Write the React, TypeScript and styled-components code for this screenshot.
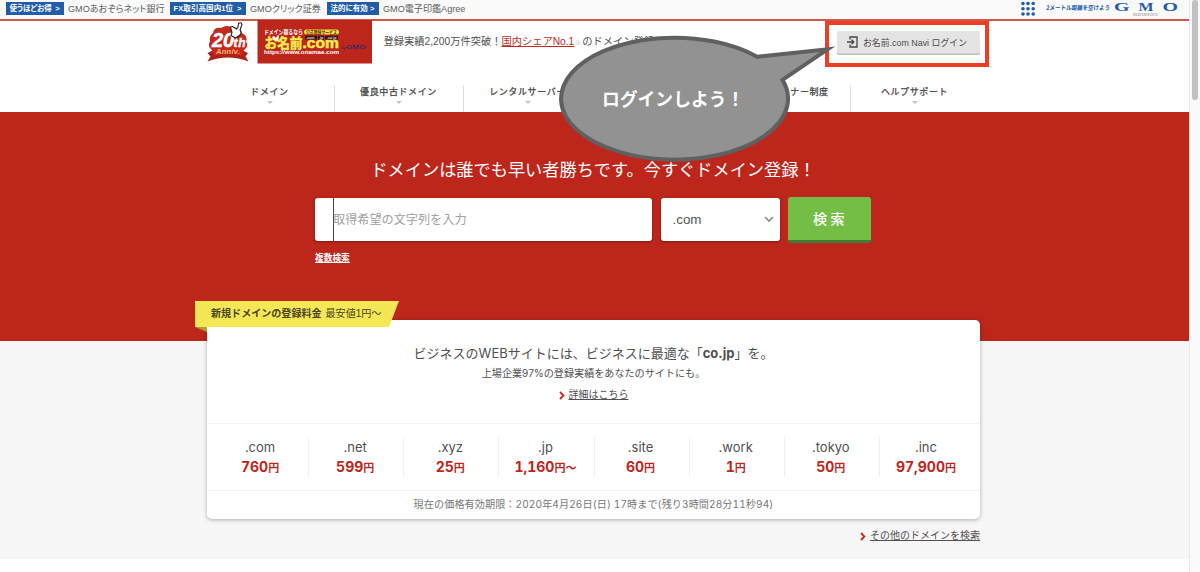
import React from "react";
import styled, { createGlobalStyle } from "styled-components";

const GlobalStyle = createGlobalStyle`
  * { box-sizing: border-box; }
  body {
    margin: 0;
    background: #fff;
    color: #505050;
    font-family: "Liberation Sans", "Noto Sans CJK JP", sans-serif;
    overflow: hidden;
  }
  a { color: inherit; text-decoration: underline; text-underline-offset: 1px; }
`;

const Window = styled.div`
  position: relative;
  display: flex;
  width: 1200px;
  height: 572px;
  overflow: hidden;
`;
const Page = styled.div`
  width: 1189px;
  flex: none;
`;
const Scrollbar = styled.div`
  flex: 1;
  background: #fafafa;
  border-left: 1px solid #e9e9e9;
  padding-left: 1.5px;
`;
const Thumb = styled.div`
  width: 6.5px;
  height: 100px;
  border-radius: 4px;
  background: #c1c1c1;
`;

const TopBar = styled.div`
  height: 21px;
  background: #fafafa;
  border-bottom: 2px solid #d2564b;
  display: flex;
  align-items: flex-start;
  padding: 0 11px 0 6px;
`;
const Promo = styled.div<{ $width: number }>`
  width: ${(p) => p.$width}px;
  height: 17px;
  display: flex;
  align-items: center;
  gap: 4px;
  white-space: nowrap;
  font-size: 9.1px;
  color: #5c5c5c;
  font-feature-settings: "palt";
`;
const Tag = styled.span<{ $width: number; $spacing: number }>`
  width: ${(p) => p.$width}px;
  height: 13px;
  line-height: 13px;
  background: #215ca8;
  color: #fff;
  font-size: 7.5px;
  font-weight: 700;
  letter-spacing: ${(p) => p.$spacing}px;
  display: flex;
  justify-content: space-between;
  padding: 0 4.5px 0 3.5px;
`;
const PromoName = styled.span`
  padding-bottom: 2px;
`;
const GroupMark = styled.svg`
  margin-left: auto;
  display: block;
`;

const Header = styled.header`
  height: 91px;
  padding: 0 209.5px 0 206.5px;
`;
const Brand = styled.div`
  height: 64px;
  display: flex;
  align-items: flex-start;
`;
const Logo = styled.svg`
  display: block;
  flex: none;
  margin-top: -1px;
`;
const Tagline = styled.div`
  margin: 12px 0 0 11.5px;
  width: 453px;
  flex: none;
  line-height: 18px;
  font-size: 10.25px;
  white-space: nowrap;
  a { color: #bd2a21; }
  small { font-size: 6px; color: #bbb; margin: 0 1px; }
`;
const LoginButton = styled.button`
  margin-top: 10px;
  width: 143.5px;
  height: 24px;
  flex: none;
  border: 0;
  border-radius: 2px;
  background: #e4e4e4;
  box-shadow: inset 0 -1.5px 0 #bfbfbf;
  display: flex;
  align-items: center;
  gap: 5.5px;
  padding: 0 0 2px 10px;
  color: #4c4c4c;
  font: 8.9px "Liberation Sans", "Noto Sans CJK JP", sans-serif;
  white-space: nowrap;
`;
const Nav = styled.nav`
  display: flex;
  height: 27px;
  margin: 0 1px 0 -1px;
`;
const NavItem = styled.div`
  flex: 1;
  display: flex;
  flex-direction: column;
  align-items: center;
  border-left: 1px solid #dedede;
  font-size: 9px;
  line-height: 15px;
  letter-spacing: 0.6px;
  white-space: nowrap;
  color: #444;
  -webkit-text-stroke: 0.25px #444;
  &:first-child { border-left: 0; }
  &::after {
    content: "";
    margin-top: 1px;
    border: 3px solid transparent;
    border-top-color: #c4c4c4;
    border-bottom: 0;
  }
`;

const Hero = styled.section`
  height: 229px;
  background: #bd261b;
  color: #fff;
  padding-top: 44px;
`;
const HeroTitle = styled.h1`
  margin: 0;
  padding-right: 3px;
  text-align: center;
  font-size: 17.2px;
  line-height: 28px;
  font-weight: 400;
`;
const Search = styled.form`
  margin: 13px 0 0 315px;
  display: flex;
  align-items: flex-start;
  height: 47px;
`;
const Field = styled.div`
  width: 337px;
  height: 43px;
  margin-top: 1px;
  background: #fff;
  border-radius: 3px;
  box-shadow: 0 1px 3px rgba(0, 0, 0, 0.35);
  padding-left: 18px;
`;
const Placeholder = styled.div`
  height: 43px;
  line-height: 44px;
  border-left: 1px solid #444;
  color: #a0a0a0;
  font-size: 12.15px;
  text-indent: -1px;
`;
const Select = styled.div`
  width: 119px;
  height: 43px;
  margin: 1px 8.5px 0;
  background: #fff;
  border-radius: 3px;
  box-shadow: 0 1px 3px rgba(0, 0, 0, 0.35);
  display: flex;
  align-items: center;
  justify-content: space-between;
  padding: 0 6px 0 12px;
  color: #555;
  font-size: 13.4px;
`;
const SearchButton = styled.button`
  width: 83px;
  height: 46px;
  border: 0;
  border-bottom: 3px solid #3e7d35;
  border-radius: 3px;
  background: #74be46;
  color: #fff;
  font: 400 14px "Noto Sans CJK JP", sans-serif;
  -webkit-text-stroke: 0.2px #fff;
  letter-spacing: 3.5px;
  padding: 0 0 1px 2px;
`;
const Multi = styled.a`
  display: block;
  margin: 6px 0 0 315px;
  width: 36px;
  font-size: 8.7px;
  font-weight: 700;
  line-height: 17px;
  white-space: nowrap;
`;

const Pricing = styled.section`
  height: 218px;
  background: #f7f7f7;
  padding: 0 209px 0 207px;
  display: flow-root;
`;
const Card = styled.div`
  position: relative;
  margin-top: -21px;
  height: 199px;
  background: #fff;
  border-radius: 5px;
  box-shadow: 0 1px 4px rgba(0, 0, 0, 0.3);
  text-align: center;
`;
const Ribbon = styled.div`
  position: absolute;
  left: -12px;
  top: -19px;
  width: 204px;
  height: 26px;
  padding-left: 16px;
  background: #f3e755;
  clip-path: polygon(0 0, 100% 0, 194px 100%, 0 100%);
  text-align: left;
  font-size: 10.05px;
  line-height: 25px;
  white-space: nowrap;
  color: #4a4420;
  b { margin-right: 4px; }
`;
const Fold = styled.div`
  position: absolute;
  left: -12px;
  top: 7px;
  width: 12px;
  height: 5px;
  background: #b39f2e;
  clip-path: polygon(0 0, 100% 0, 100% 100%);
`;
const Intro = styled.div`
  height: 104px;
  padding-top: 22px;
  border-bottom: 1px solid #f4f4f4;
`;
const Lead = styled.div`
  font: 13px/22px Inter, "Noto Sans CJK JP", sans-serif;
`;
const Sub = styled.div`
  font: 10.1px/18px Inter, "Noto Sans CJK JP", sans-serif;
`;
const More = styled.div<{ $right?: boolean }>`
  display: flex;
  justify-content: ${(p) => (p.$right ? "flex-end" : "center")};
  align-items: center;
  gap: 4px;
  font-size: 10px;
  line-height: 16px;
  margin-top: ${(p) => (p.$right ? 9 : 5)}px;
`;
const Prices = styled.div`
  height: 67px;
  padding: 13px 6px;
  display: flex;
  border-bottom: 1px solid #f2f2f2;
`;
const Price = styled.div`
  flex: 1;
  height: 40px;
  border-left: 1px solid #f1f1f1;
  padding-right: 2px;
  &:first-child { border-left-color: transparent; }
`;
const Tld = styled.div`
  font: 13px/21px Inter, "Noto Sans CJK JP", sans-serif;
`;
const Amount = styled.div`
  font: 700 14px/17px Inter, "Noto Sans CJK JP", sans-serif;
  font-feature-settings: "tnum";
  color: #bd261b;
  small { font: 700 11px/17px "Noto Sans CJK JP", sans-serif; }
`;
const Expiry = styled.div`
  font: 10.1px/27px Inter, "Noto Sans CJK JP", sans-serif;
  font-feature-settings: "tnum";
  letter-spacing: 0.1px;
  color: #777;
`;

const LoginFrame = styled.div`
  position: absolute;
  left: 824.5px;
  top: 21px;
  width: 164.5px;
  height: 46px;
  border: 4px solid #ef3d26;
`;
const Balloon = styled.svg`
  position: absolute;
  left: 550px;
  top: 30px;
`;
const BalloonText = styled.div`
  position: absolute;
  left: 602px;
  top: 84px;
  font: 700 17.8px/28px "Noto Sans CJK JP", sans-serif;
  color: #fff;
  white-space: nowrap;
`;

const promos = [
  { tag: "使うほどお得", tagWidth: 58, tagSpacing: -0.1, name: "GMOあおぞらネット銀行", width: 164 },
  { tag: "FX取引高国内1位", tagWidth: 76, tagSpacing: 0.1, name: "GMOクリック証券", width: 157 },
  { tag: "法的に有効", tagWidth: 52, tagSpacing: 0, name: "GMO電子印鑑Agree", width: 160 },
];
const navItems = ["ドメイン", "優良中古ドメイン", "レンタルサーバー", "ビジネスツール", "販売パートナー制度", "ヘルプサポート"];
const prices = [
  [".com", "760", "円"],
  [".net", "599", "円"],
  [".xyz", "25", "円"],
  [".jp", "1,160", "円〜"],
  [".site", "60", "円"],
  [".work", "1", "円"],
  [".tokyo", "50", "円"],
  [".inc", "97,900", "円"],
];

const RedChevron = () => (
  <svg width="6" height="9" viewBox="0 0 6 9">
    <path d="M1 1l3.4 3.5L1 8" fill="none" stroke="#c8281c" strokeWidth="1.8" />
  </svg>
);

const GroupLogo = () => (
  <GroupMark width="160" height="18" viewBox="0 0 160 18">
    <g fill="#215ca8">
      {[3.5, 8.8, 14].map((y) =>
        [5, 10, 15.2].map((x) => <circle key={`${x}-${y}`} cx={x} cy={y} r="1.8" />)
      )}
      <text x="28" y="10.5" fontSize="6.2" fontWeight="700" fontFamily="Noto Sans CJK JP, sans-serif" textLength="64" lengthAdjust="spacingAndGlyphs" transform="skewX(-6) translate(1 0)">2メートル距離を空けよう</text>
      <g fontFamily="Liberation Serif, serif" fontWeight="700" fontSize="13.5">
        <text x="96" y="10.8" textLength="15.5" lengthAdjust="spacingAndGlyphs">G</text>
        <text x="120.5" y="10.8" textLength="15" lengthAdjust="spacingAndGlyphs">M</text>
        <text x="144.5" y="10.8" textLength="15.5" lengthAdjust="spacingAndGlyphs">O</text>
      </g>
    </g>
    <text x="115" y="15.8" fontSize="3.8" fill="#888" fontFamily="Liberation Serif, serif" textLength="25">KEEP DISTANCE</text>
  </GroupMark>
);

const BrandLogo = () => (
  <Logo width="165.5" height="44" viewBox="0 0 165.5 44">
    <path d="M0.5 33l8-4h24l8.5 4-2.5 3.5 3 5q-20.500-8-41 0l3-5z" fill="#ad2118" />
    <path d="M6 13q1-6 8-5 6-4 12 0 8-1 9 5 6 3 4 8 3 6-2 9l-2 6q-14-4-28 0l-2-6q-5-3-2-9-1-5 3-8z" fill="#c5281e" />
    <g fontFamily="Liberation Sans, sans-serif" fontWeight="700" fontStyle="italic">
      <text x="5" y="27" fontSize="20" fill="#fff" stroke="#fff" strokeWidth="0.5" textLength="22">20</text>
      <text x="26.5" y="27" fontSize="12" fill="#fff" stroke="#fff" strokeWidth="0.4" textLength="12">th</text>
      <text x="9" y="34" fontSize="7.5" fill="#efbd69" textLength="24">Anniv.</text>
    </g>
    <path d="M24 9q-1-3 1.500-2.500l4 2.500 1.500-2 .5-3.500q2.500-2 3.500 1l-2 5.500q2 3 0 5l-4.500 3-4.500-2.500 1-3z" fill="#fff" stroke="#222" strokeWidth="1.1" />
    <rect x="50.5" y="0" width="115" height="43.5" fill="#bd261b" />
    <g fontFamily="Liberation Sans, Noto Sans CJK JP, sans-serif" fontWeight="700">
      <text x="57" y="14" fontSize="6.2" fill="#fff" textLength="39" lengthAdjust="spacingAndGlyphs">ドメイン取るなら</text>
      <rect x="97" y="9.5" width="35" height="5" rx="2.5" fill="#f4df3d" />
      <text x="99" y="13.7" fontSize="4.4" fill="#5d2910" textLength="31" lengthAdjust="spacingAndGlyphs">公式登録サービス</text>
      <g fill="#f8ec4e" stroke="#f8ec4e" strokeWidth="0.5">
        <text x="57.5" y="28.3" fontSize="13.2" textLength="38" lengthAdjust="spacingAndGlyphs">お名前</text>
        <text x="95.5" y="28" fontSize="14" textLength="36.5" lengthAdjust="spacingAndGlyphs">.com</text>
      </g>
      <path d="M98 15.700h12v3.800h-12zm13 0h6v3.800h-6zm7 0h13v3.800h-13z" fill="#331414" />
      <g fill="#ddd" fontSize="3.6">
        <text x="99" y="18.7">.com</text>
        <text x="112" y="18.7">.jp</text>
        <text x="120" y="18.7">.co.jp</text>
      </g>
      <path d="M67 20l-2-3 2-1 2 2 2-3 1 1-1 5z" fill="#fff" />
      <text x="57" y="34" fontSize="5.6" fill="#fff" textLength="75" lengthAdjust="spacingAndGlyphs">https://www.onamae.com</text>
      <text x="134" y="29" fontSize="3.8" fill="#302b66">by</text>
      <text x="139" y="29.2" fontSize="5.2" fill="#302b66" textLength="19.5" lengthAdjust="spacingAndGlyphs">GMO</text>
    </g>
  </Logo>
);

export default function App() {
  return (
    <Window>
      <GlobalStyle />
      <Page>
        <TopBar>
          {promos.map((p) => (
            <Promo key={p.tag} $width={p.width}>
              <Tag $width={p.tagWidth} $spacing={p.tagSpacing}>
                <span>{p.tag}</span>
                <span>&gt;</span>
              </Tag>
              <PromoName>{p.name}</PromoName>
            </Promo>
          ))}
          <GroupLogo />
        </TopBar>
        <Header>
          <Brand>
            <BrandLogo />
            <Tagline>
              登録実績2,200万件突破！<a>国内シェアNo.1</a>
              <small>※</small>のドメイン登録サービス
            </Tagline>
            <LoginButton>
              <svg width="11" height="12" viewBox="0 0 11 12" fill="none" stroke="#444" strokeWidth="1.3">
                <path d="M3 3.5V1h7v10H3V8.5M0 6h6.5M4.5 3.8L6.8 6 4.5 8.2" />
              </svg>
              お名前.com Navi ログイン
            </LoginButton>
          </Brand>
          <Nav>
            {navItems.map((n) => (
              <NavItem key={n}>{n}</NavItem>
            ))}
          </Nav>
        </Header>
        <Hero>
          <HeroTitle>ドメインは誰でも早い者勝ちです。今すぐドメイン登録！</HeroTitle>
          <Search>
            <Field>
              <Placeholder>取得希望の文字列を入力</Placeholder>
            </Field>
            <Select>
              .com
              <svg width="10" height="7" viewBox="0 0 10 7">
                <path d="M1 1l4 4 4-4" fill="none" stroke="#888" strokeWidth="1.6" />
              </svg>
            </Select>
            <SearchButton type="button">検索</SearchButton>
          </Search>
          <Multi>複数検索</Multi>
        </Hero>
        <Pricing>
          <Card>
            <Intro>
              <Lead>
                ビジネスのWEBサイトには、ビジネスに最適な「<b>co.jp</b>」を。
              </Lead>
              <Sub>上場企業97%の登録実績をあなたのサイトにも。</Sub>
              <More>
                <RedChevron />
                <a>詳細はこちら</a>
              </More>
            </Intro>
            <Prices>
              {prices.map(([tld, amount, unit]) => (
                <Price key={tld}>
                  <Tld>{tld}</Tld>
                  <Amount>
                    {amount}
                    <small>{unit}</small>
                  </Amount>
                </Price>
              ))}
            </Prices>
            <Expiry>現在の価格有効期限：2020年4月26日(日) 17時まで(残り3時間28分11秒94)</Expiry>
            <Ribbon>
              <b>新規ドメインの登録料金</b>最安値1円〜
            </Ribbon>
            <Fold />
          </Card>
          <More $right>
            <RedChevron />
            <a>その他のドメインを検索</a>
          </More>
        </Pricing>
      </Page>
      <Scrollbar>
        <Thumb />
      </Scrollbar>
      <LoginFrame />
      <Balloon width="300" height="140" viewBox="550 30 300 140">
        <path
          d="M757 56.8L827.5 49.3 782.5 79.9A113.5 61 0 1 1 757 56.8z"
          fill="#929292"
          stroke="#606060"
          strokeWidth="4"
          strokeMiterlimit="10"
        />
      </Balloon>
      <BalloonText>ログインしよう！</BalloonText>
    </Window>
  );
}
